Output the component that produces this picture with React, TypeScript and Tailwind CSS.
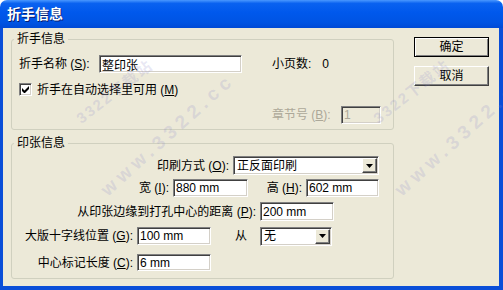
import type { FC, ReactNode } from "react";

const sunken =
    "border border-t-[#808080] border-l-[#808080] border-r-white border-b-white shadow-[inset_1px_1px_0_#404040,inset_-1px_-1px_0_#d4d0c8]";
const raised =
    "border border-t-white border-l-white border-r-[#404040] border-b-[#404040] shadow-[inset_-1px_-1px_0_#808080] bg-[#ece9d8]";

// mnemonic like (S) with underlined letter
const Mn: FC<{ k: string }> = ({ k }) => (
    <>
        (<u className="underline-offset-1">{k}</u>):
    </>
);

const Field: FC<{ value: string; className: string; disabled?: boolean }> = ({ value, className, disabled }) => (
    <input
        readOnly
        defaultValue={value}
        className={`${sunken} ${className} px-[2px] text-[12px] leading-[14px] outline-none ${
            disabled ? "bg-[#ece9d8] text-[#aca899]" : "bg-white text-black"
        }`}
    />
);

const Combo: FC<{ value: string; className: string }> = ({ value, className }) => (
    <div className={`flex items-stretch bg-white p-[1px] ${sunken} ${className}`}>
        <span className="flex flex-1 items-center pl-[2px] leading-[14px]">{value}</span>
        <span className={`flex w-[15px] items-center justify-center ${raised}`}>
            <svg width="7" height="4" viewBox="0 0 7 4">
                <path d="M0 0h7L3.5 4z" fill="#000" />
            </svg>
        </span>
    </div>
);

const Label: FC<{ className: string; children: ReactNode }> = ({ className, children }) => (
    <span className={`whitespace-nowrap pr-[4px] text-right ${className}`}>{children}</span>
);

const Group: FC<{ title: string; className?: string; children: ReactNode }> = ({ title, className, children }) => (
    <fieldset className={`min-w-0 rounded-[3px] border border-[#d0d0bf] ${className ?? ""}`}>
        <legend className="ml-[2px] px-[3px] leading-[14px]">{title}</legend>
        {children}
    </fieldset>
);

const Button: FC<{ children: ReactNode; primary?: boolean }> = ({ children, primary }) => (
    <button
        className={`flex h-[20px] w-[75px] items-center justify-center bg-[#ece9d8] leading-[14px] ${
            primary
                ? "border border-black shadow-[inset_1px_1px_0_#fff,inset_-1px_-1px_0_#808080]"
                : raised
        }`}
    >
        {children}
    </button>
);

export default function App() {
    return (
        <div className="relative h-[290px] w-[503px] overflow-hidden bg-white font-['Liberation_Sans','Noto_Sans_CJK_SC',sans-serif] text-[12px] text-black">
            <div className="flex h-full flex-col">
                {/* title bar */}
                <div className="flex h-[28px] shrink-0 items-center rounded-t-[7px] bg-[linear-gradient(to_bottom,#4a98ff_0%,#0a62f0_12%,#0058ec_45%,#0054e3_80%,#004ad6_100%)] pl-[7px]">
                    <span className="text-[14px] font-bold leading-[16px] text-white [text-shadow:1px_1px_0_#0a1e6e]">
                        折手信息
                    </span>
                </div>

                <div className="flex flex-1 border-b-[4px] border-l-[3px] border-r-[4px] border-[#0a4ed8] bg-[#ece9d8]">
                    <div className="w-[391px] shrink-0 pl-[8px] pt-[4px]">
                        <Group title="折手信息" className="pb-[5px]">
                            <div className="mt-[9px] flex h-[18px] items-center pl-[7px]">
                                <span className="w-[80px] whitespace-nowrap">
                                    折手名称 <Mn k="S" />
                                </span>
                                <Field value="整印张" className="h-[18px] w-[143px]" />
                                <span className="ml-[30px]">小页数:</span>
                                <span className="ml-[11px]">0</span>
                            </div>
                            <div className="mt-[10px] flex h-[13px] items-center pl-[7px]">
                                <span className={`flex h-[13px] w-[13px] items-center justify-center bg-white ${sunken}`}>
                                    <svg width="7" height="7" viewBox="0 0 7 7">
                                        <path d="M0 2v3l2 2h1l4-4V0L2.5 4.5z" fill="#000" />
                                    </svg>
                                </span>
                                <span className="ml-[5px]">
                                    折手在自动选择里可用 (<u>M</u>)
                                </span>
                            </div>
                            <div className="mt-[10px] flex h-[18px] items-center pl-[260px]">
                                <span className="w-[69px] whitespace-nowrap text-[#aca899]">
                                    章节号 <Mn k="B" />
                                </span>
                                <Field value="1" disabled className="h-[18px] w-[40px]" />
                            </div>
                        </Group>

                        <Group title="印张信息" className="mt-[6px] pb-[7px]">
                            <div className="mt-[6px] flex h-[19px] items-center">
                                <Label className="w-[221px]">
                                    印刷方式 <Mn k="O" />
                                </Label>
                                <Combo value="正反面印刷" className="h-[19px] w-[146px]" />
                            </div>
                            <div className="mt-[4px] flex h-[18px] items-center">
                                <Label className="w-[161px]">
                                    宽 <Mn k="I" />
                                </Label>
                                <Field value="880 mm" className="h-[18px] w-[75px]" />
                                <Label className="w-[58px]">
                                    高 <Mn k="H" />
                                </Label>
                                <Field value="602 mm" className="h-[18px] w-[73px]" />
                            </div>
                            <div className="mt-[5px] flex h-[19px] items-center">
                                <Label className="w-[248px]">
                                    从印张边缘到打孔中心的距离 <Mn k="P" />
                                </Label>
                                <Field value="200 mm" className="h-[19px] w-[74px]" />
                            </div>
                            <div className="mt-[6px] flex h-[18px] items-center">
                                <Label className="w-[125px]">
                                    大版十字线位置 <Mn k="G" />
                                </Label>
                                <Field value="100 mm" className="h-[18px] w-[74px]" />
                                <span className="ml-[24px] w-[25px]">从</span>
                                <Combo value="无" className="h-[19px] w-[72px]" />
                            </div>
                            <div className="mt-[9px] flex h-[17px] items-center">
                                <Label className="w-[125px]">
                                    中心标记长度 <Mn k="C" />
                                </Label>
                                <Field value="6 mm" className="h-[17px] w-[74px]" />
                            </div>
                        </Group>
                    </div>

                    <div className="ml-[20px] flex flex-col gap-[9px] pt-[9px]">
                        <Button primary>确定</Button>
                        <Button>取消</Button>
                    </div>
                </div>
            </div>

            {/* watermark */}
            <div className="pointer-events-none absolute left-[115px] top-[92px] -translate-x-1/2 -translate-y-1/2 -rotate-[38deg] whitespace-nowrap text-[15px] font-bold tracking-[2px] text-[#8a86c8]/20">
                3322下载站
            </div>
            <div className="pointer-events-none absolute left-[168px] top-[135px] -translate-x-1/2 -translate-y-1/2 -rotate-[42deg] whitespace-nowrap text-[19px] font-bold tracking-[5px] text-[#8a86c8]/20">
                www.3322.cc
            </div>
            <div className="pointer-events-none absolute left-[412px] top-[92px] -translate-x-1/2 -translate-y-1/2 -rotate-[38deg] whitespace-nowrap text-[15px] font-bold tracking-[2px] text-[#8a86c8]/20">
                3322下载站
            </div>
            <div className="pointer-events-none absolute left-[462px] top-[135px] -translate-x-1/2 -translate-y-1/2 -rotate-[42deg] whitespace-nowrap text-[19px] font-bold tracking-[5px] text-[#8a86c8]/20">
                www.3322.cc
            </div>
        </div>
    );
}
